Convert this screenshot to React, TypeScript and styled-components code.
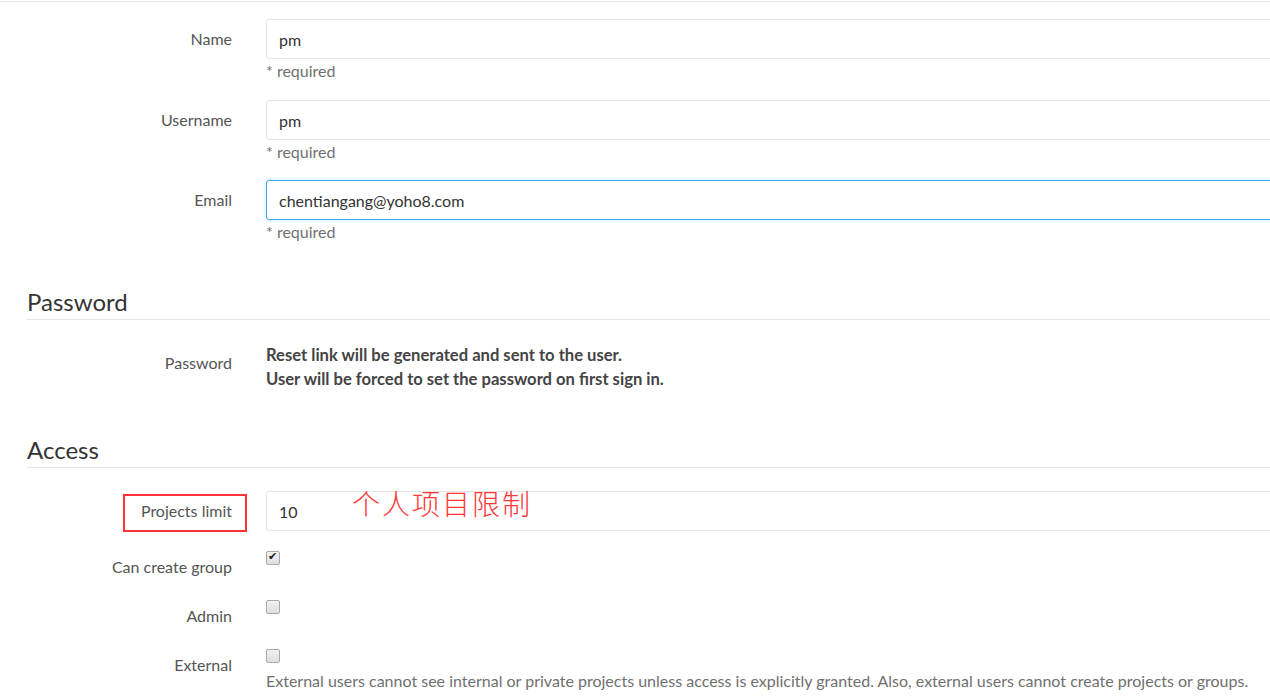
import styled, { createGlobalStyle } from "styled-components";

const GlobalStyle = createGlobalStyle`
	html, body {
		margin: 0;
		padding: 0;
		background: #fff;
		overflow: hidden;
	}
	body {
		font-family: Lato, "Noto Sans", "Liberation Sans", sans-serif;
		font-size: 16px;
		color: #555;
	}
`;

const Page = styled.div`
	width: 1310px;
	margin-top: 1px;
	border-top: 1px solid #e5e5e5;
	padding: 0 0 0 27px;
	box-sizing: border-box;
`;

const Row = styled.div<{ $mt?: number }>`
	display: grid;
	grid-template-columns: 205px 1fr;
	column-gap: 34px;
	margin-top: ${(p) => p.$mt ?? 0}px;
`;

const Label = styled.div<{ $pt: number }>`
	position: relative;
	text-align: right;
	padding-top: ${(p) => p.$pt}px;
	line-height: 20px;
	color: #555;
`;

const Control = styled.div<{ $pt?: number }>`
	position: relative;
	padding-top: ${(p) => p.$pt ?? 0}px;
`;

const TextInput = styled.input<{ $focus?: boolean }>`
	display: block;
	width: 100%;
	height: 40px;
	box-sizing: border-box;
	border: 1px solid ${(p) => (p.$focus ? "#3aabf0" : "#e5e5e5")};
	box-shadow: ${(p) => (p.$focus ? "0 0 4px rgba(58,171,240,0.35)" : "none")};
	border-radius: 3px;
	padding: 0 12px;
	font-family: inherit;
	font-size: 16px;
	color: #333;
	outline: none;
	background: #fff;
`;

const Help = styled.div<{ $mt?: number }>`
	margin-top: ${(p) => p.$mt ?? 1}px;
	line-height: 21px;
	color: #707070;
`;

const Heading = styled.h3<{ $mt: number }>`
	margin: ${(p) => p.$mt}px 0 0;
	padding-bottom: 4px;
	border-bottom: 1px solid #e5e5e5;
	font-size: 24px;
	font-weight: 400;
	line-height: 26px;
	color: #333;
`;

const Strong = styled.div`
	font-weight: 700;
	font-size: 16.6px;
	line-height: 24px;
	color: #444;
`;

const Box = styled.span<{ $checked?: boolean }>`
	display: block;
	width: 12px;
	height: 12px;
	border: 1px solid #a9a9a9;
	border-radius: 2px;
	background: linear-gradient(#f2f2f2, #dedede);
	position: relative;
	&::after {
		content: ${(p) => (p.$checked ? '"✔"' : '""')};
		position: absolute;
		left: 1px;
		top: -3px;
		font-size: 11px;
		line-height: 16px;
		color: #222;
		font-family: "DejaVu Sans", sans-serif;
	}
`;

const RedBox = styled.div`
	position: absolute;
	left: 96px;
	right: -15px;
	top: 3px;
	height: 38px;
	border: 2px solid #f33;
	box-sizing: border-box;
`;

const Note = styled.div`
	position: absolute;
	left: 86px;
	top: -8px;
	font-family: "Noto Sans CJK SC", sans-serif;
	font-weight: 300;
	font-size: 28px;
	letter-spacing: 2px;
	color: #ff3636;
	pointer-events: none;
`;

function Required() {
	return <Help>* required</Help>;
}

export default function App() {
	return (
		<>
			<GlobalStyle />
			<Page>
				<Row $mt={17}>
					<Label $pt={10}>Name</Label>
					<Control>
						<TextInput defaultValue="pm" />
						<Required />
					</Control>
				</Row>
				<Row $mt={19}>
					<Label $pt={10}>Username</Label>
					<Control>
						<TextInput defaultValue="pm" />
						<Required />
					</Control>
				</Row>
				<Row $mt={18}>
					<Label $pt={10}>Email</Label>
					<Control>
						<TextInput $focus defaultValue="chentiangang@yoho8.com" />
						<Required />
					</Control>
				</Row>

				<Heading $mt={47}>Password</Heading>
				<Row $mt={23}>
					<Label $pt={10}>Password</Label>
					<Control>
						<Strong>Reset link will be generated and sent to the user.</Strong>
						<Strong>User will be forced to set the password on first sign in.</Strong>
					</Control>
				</Row>

				<Heading $mt={46}>Access</Heading>
				<Row $mt={23}>
					<Label $pt={10}>
						Projects limit
						<RedBox />
					</Label>
					<Control>
						<TextInput defaultValue="10" />
						<Note>个人项目限制</Note>
					</Control>
				</Row>
				<Row $mt={12}>
					<Label $pt={14}>Can create group</Label>
					<Control $pt={8}>
						<Box $checked />
					</Control>
				</Row>
				<Row $mt={15}>
					<Label $pt={14}>Admin</Label>
					<Control $pt={8}>
						<Box />
					</Control>
				</Row>
				<Row $mt={15}>
					<Label $pt={14}>External</Label>
					<Control $pt={8}>
						<Box />
						<Help $mt={7}>
							External users cannot see internal or private projects unless access is explicitly granted. Also, external users cannot create projects or groups.
						</Help>
					</Control>
				</Row>
			</Page>
		</>
	);
}
